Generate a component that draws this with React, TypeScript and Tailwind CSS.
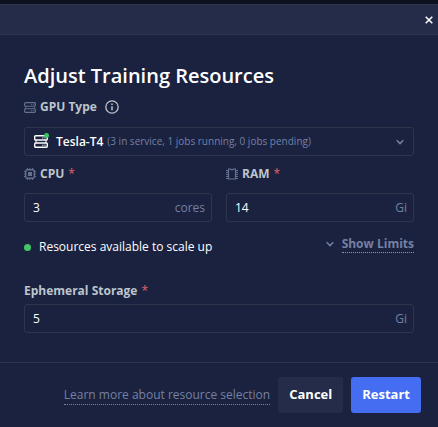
import React from 'react';

type IconProps = { className?: string };

const ServerIcon: React.FC<IconProps> = ({ className }) => (
  <svg viewBox="0 0 14 13" fill="none" stroke="currentColor" strokeWidth="1.400" className={className} aria-hidden="true">
    <rect x="0.700" y="0.700" width="12.600" height="4.300" rx="1" />
    <rect x="0.700" y="8" width="12.600" height="4.300" rx="1" />
    <path d="M2 5v3M12 5v3" strokeWidth="1" />
    <path d="M8.200 2.900h1.200M10.400 2.900h1.200M8.200 10.200h1.200M10.400 10.200h1.200" strokeWidth="1" />
  </svg>
);

const CpuIcon: React.FC<IconProps> = ({ className }) => (
  <svg viewBox="0 0 12 12" fill="none" stroke="currentColor" className={className} aria-hidden="true">
    <rect x="1.700" y="1.700" width="8.600" height="8.600" rx="1.600" strokeWidth="1.400" />
    <rect x="4.500" y="4.500" width="3" height="3" fill="currentColor" />
    <path d="M3.500 0v1.500M6 0v1.500M8.500 0v1.500M3.500 10.500V12M6 10.500V12M8.500 10.500V12M0 3.500h1.500M0 6h1.500M0 8.500h1.500M10.500 3.500H12M10.500 6H12M10.500 8.500H12" />
  </svg>
);

const RamIcon: React.FC<IconProps> = ({ className }) => (
  <svg viewBox="0 0 12 12" fill="none" stroke="currentColor" className={className} aria-hidden="true">
    <path d="M2.500 1h2c.3 1 2.700 1 3 0h2v10h-7z" strokeWidth="1.200" />
    <path d="M0 2.500h2M0 4.500h2M0 6.500h2M0 8.500h2M0 10.500h2M10 2.500h2M10 4.500h2M10 6.500h2M10 8.500h2M10 10.500h2" />
  </svg>
);

const InfoIcon: React.FC<IconProps> = ({ className }) => (
  <svg viewBox="0 0 14 14" fill="none" stroke="currentColor" className={className} aria-hidden="true">
    <circle cx="7" cy="7" r="6.200" strokeWidth="1.300" />
    <path d="M7 6.300v4M7 3.500v1.500" strokeWidth="1.500" />
  </svg>
);

const ChevronIcon: React.FC<IconProps> = ({ className }) => (
  <svg viewBox="0 0 8 8" fill="none" stroke="currentColor" strokeWidth="1.500" className={className} aria-hidden="true">
    <path d="M0.700 2.300L4 5.600l3.300-3.300" />
  </svg>
);

const Required = () => <span className="text-[12px] font-normal text-[#e0626a]">*</span>;

type FieldProps = { id: string; value: string; unit: string };

const UnitInput: React.FC<FieldProps> = ({ id, value, unit }) => (
  <div className="flex h-[29px] items-center rounded-[3px] border border-[#2e364c] pr-1.5 pl-2">
    <input
      id={id}
      defaultValue={value}
      className="w-full min-w-0 flex-1 bg-transparent text-[12px] font-medium text-white outline-none"
    />
    <span className="text-[12px] text-[#7580a3]">{unit}</span>
  </div>
);

const App: React.FC = () => {
  return (
    <div className="min-h-screen bg-[#1a223f] font-['Open_Sans','Noto_Sans',sans-serif] text-white">
      <div className="h-1 bg-[#0c101f]" />
      <header className="flex h-[31px] items-center justify-end border-y border-[#2e364b] bg-[#242c49] pr-[5px]">
        <button type="button" aria-label="Close" className="text-white">
          <svg viewBox="0 0 8 8" fill="none" stroke="currentColor" strokeWidth="1.500" className="h-2 w-2">
            <path d="M0.700 0.700l6.600 6.600M7.300 0.700L0.700 7.300" />
          </svg>
        </button>
      </header>

      <main className="px-6 pt-[26px] pb-[29px]">
        <h1 className="text-[20px] leading-[30px] font-semibold whitespace-nowrap">Adjust Training Resources</h1>

        <div className="mt-[6px] flex h-5 items-center">
          <ServerIcon className="mr-1 h-[11px] w-3 text-[#66718f]" />
          <label htmlFor="gpu" className="text-[12px] font-bold text-[#bdc5cd]">GPU Type</label>
          <InfoIcon className="ml-2 h-[14px] w-[14px] text-[#bdc5cd]" />
        </div>

        <div className="relative mt-[10px] flex h-[29px] items-center rounded-[3px] border border-[#2e364c] px-[9px]">
          <div className="relative mr-2">
            <ServerIcon className="h-[13px] w-[14px]" />
            <span className="absolute -top-[2px] -right-px h-[5px] w-[5px] rounded-full bg-[#3fc463]" />
          </div>
          <span className="text-[12px] font-semibold whitespace-nowrap">Tesla-T4</span>
          <span className="ml-1 text-[10px] whitespace-nowrap text-[#7580a3]">(3 in service, 1 jobs running, 0 jobs pending)</span>
          <ChevronIcon className="ml-auto h-2 w-2 text-[#7580a3]" />
          <select id="gpu" className="absolute inset-0 h-full w-full cursor-pointer opacity-0">
            <option>Tesla-T4</option>
          </select>
        </div>

        <div className="mt-2 grid grid-cols-2 gap-[14px]">
          <div>
            <label htmlFor="cpu" className="mb-[9px] flex h-5 items-center gap-1 text-[12px] font-bold text-[#bdc5cd]">
              <CpuIcon className="h-3 w-3 text-[#66718f]" />
              CPU
              <Required />
            </label>
            <UnitInput id="cpu" value="3" unit="cores" />
          </div>
          <div>
            <label htmlFor="ram" className="mb-[9px] flex h-5 items-center gap-1 text-[12px] font-bold text-[#bdc5cd]">
              <RamIcon className="h-3 w-3 text-[#66718f]" />
              RAM
              <Required />
            </label>
            <UnitInput id="ram" value="14" unit="Gi" />
          </div>
        </div>

        <div className="mt-[13px] flex items-start justify-between">
          <p className="flex items-center gap-2 pt-[2px] text-[12px] leading-5">
            <span className="h-[7px] w-[7px] rounded-full bg-[#43c667]" />
            Resources available to scale up
          </p>
          <button type="button" className="flex items-center gap-2 text-[12px] leading-[17px] font-bold text-[#7580a3]">
            <ChevronIcon className="h-2 w-2" />
            <span className="border-b border-dotted border-[#8b96b8]">Show Limits</span>
          </button>
        </div>

        <label htmlFor="storage" className="mt-6 mb-[3px] flex h-5 items-center gap-1 text-[12px] font-bold text-[#bdc5cd]">
          Ephemeral Storage
          <Required />
        </label>
        <UnitInput id="storage" value="5" unit="Gi" />
      </main>

      <footer className="flex items-center justify-end gap-2 border-t border-[#2e364b] pt-[14px] pr-[17px] pb-[14px]">
        <a href="#" className="border-b border-dotted border-[#7580a3] text-[12px] leading-[18px] whitespace-nowrap text-[#7580a3]">
          Learn more about resource selection
        </a>
        <button type="button" className="h-9 rounded-[3px] bg-[#242c49] px-[11px] text-[13px] font-bold">Cancel</button>
        <button type="button" className="h-9 rounded-[3px] bg-[#446df2] px-[11px] text-[13px] font-bold">Restart</button>
      </footer>
    </div>
  );
};

export default App;
